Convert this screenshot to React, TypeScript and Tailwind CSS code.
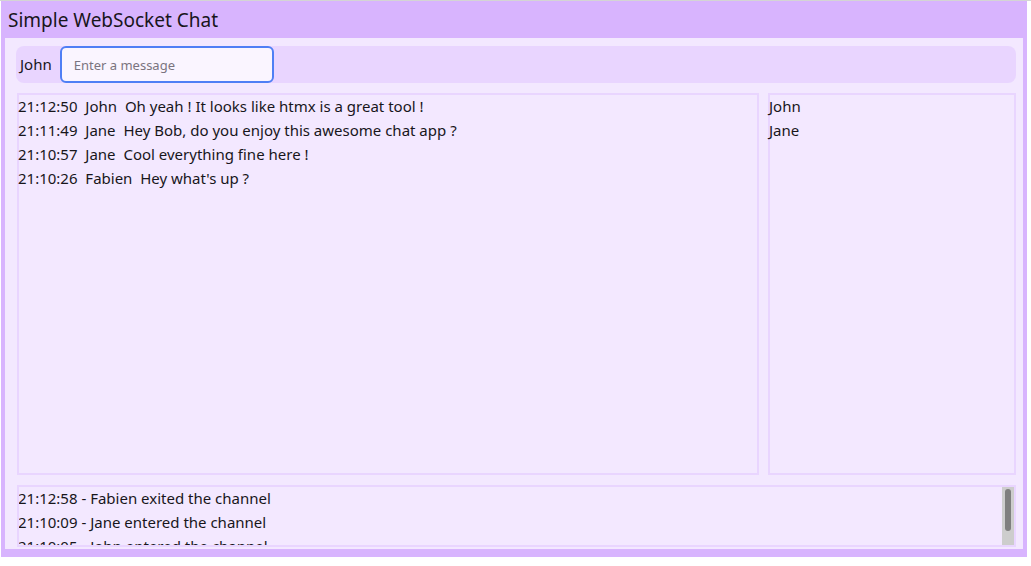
import React from "react";

const messages = [
  { time: "21:12:50", user: "John", text: "Oh yeah ! It looks like htmx is a great tool !" },
  { time: "21:11:49", user: "Jane", text: "Hey Bob, do you enjoy this awesome chat app ?" },
  { time: "21:10:57", user: "Jane", text: "Cool everything fine here !" },
  { time: "21:10:26", user: "Fabien", text: "Hey what's up ?" },
];

const events = [
  "21:12:58 - Fabien exited the channel",
  "21:10:09 - Jane entered the channel",
  "21:10:05 - John entered the channel",
];

export default function App() {
  const [msg, setMsg] = React.useState("");

  return (
    <div className="h-screen w-full bg-white border-t border-[#d4d4d4] font-['Noto_Sans',sans-serif] text-[#18161b]">
      <div className="ml-px w-[1026px] h-[556px] border-x-4 border-b-8 border-[#d8b4fe] flex flex-col">
        <div className="h-[37px] shrink-0 bg-[#d8b4fe] flex items-center px-[3px] pt-0.5 text-[19px]">
          Simple WebSocket Chat
        </div>
        <div className="flex-1 bg-[#f3e8ff] pl-[11px] pr-[7px] pt-2 pb-0.5 flex flex-col gap-[10px]">
          <div className="h-[37px] shrink-0 bg-[#e9d5ff] rounded-lg flex items-center pl-1">
            <span className="text-[15px] mr-2">John</span>
            <input
              autoFocus
              value={msg}
              onChange={(e) => setMsg(e.target.value)}
              placeholder="Enter a message"
              className="h-[37px] w-[214px] bg-[#faf5ff] border-2 border-[#4f7ff5] rounded-md px-3 text-[13px] outline-none placeholder:text-[#7a7480]"
            />
          </div>
          <div className="flex gap-[9px] h-[382px] shrink-0 pl-px">
            <div className="flex-1 border-2 border-[#e9d5ff] text-[15px] leading-6">
              <div className="-mt-px -ml-px">
                {messages.map((m) => (
                  <div key={m.time}>
                    {m.time}&nbsp;&nbsp;{m.user}&nbsp;&nbsp;{m.text}
                  </div>
                ))}
              </div>
            </div>
            <div className="w-[248px] border-2 border-[#e9d5ff] text-[15px] leading-6">
              <div className="-mt-px -ml-px">
                <div>John</div>
                <div>Jane</div>
              </div>
            </div>
          </div>
          <div className="h-[62px] shrink-0 ml-px border-2 border-[#e9d5ff] flex">
            <div className="flex-1 overflow-hidden text-[15px] leading-6">
              <div className="-mt-px -ml-px">
                {events.map((e) => (
                  <div key={e}>{e}</div>
                ))}
              </div>
            </div>
            <div className="w-3 bg-[#cdcdcd] flex justify-center pt-0.5">
              <div className="w-[6px] h-[42px] rounded-full bg-[#7f7f7f]" />
            </div>
          </div>
        </div>
      </div>
    </div>
  );
}
